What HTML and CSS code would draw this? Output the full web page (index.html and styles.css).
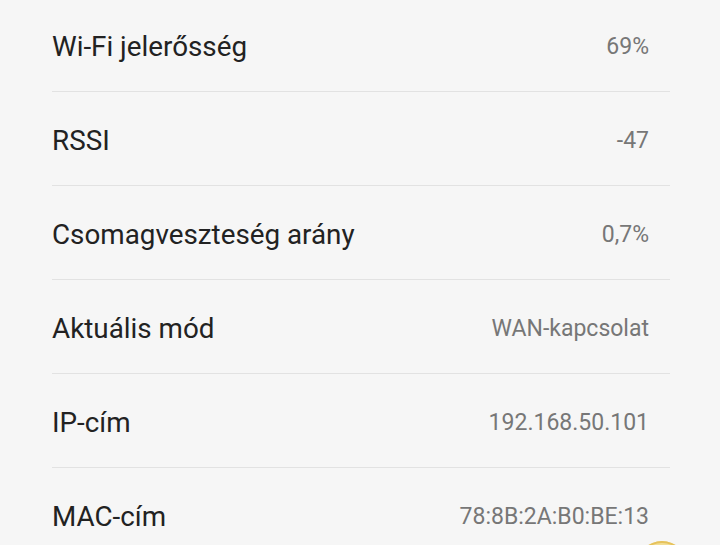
FILE: index.html
```html
<!DOCTYPE html>
<html lang="hu">
<head>
    <meta charset="UTF-8">
    <meta name="viewport" content="width=device-width, initial-scale=1.0">
    <title>Wi-Fi adatok</title>
    <link rel="stylesheet" href="styles.css">
</head>
<body>
    <div class="info-list">
        <div class="info-row">
            <span class="label">Wi-Fi jelerősség</span>
            <span class="value">69%</span>
        </div>
        <div class="info-row">
            <span class="label">RSSI</span>
            <span class="value">-47</span>
        </div>
        <div class="info-row">
            <span class="label">Csomagveszteség arány</span>
            <span class="value">0,7%</span>
        </div>
        <div class="info-row">
            <span class="label">Aktuális mód</span>
            <span class="value">WAN-kapcsolat</span>
        </div>
        <div class="info-row">
            <span class="label">IP-cím</span>
            <span class="value">192.168.50.101</span>
        </div>
        <div class="info-row">
            <span class="label">MAC-cím</span>
            <span class="value">78:8B:2A:B0:BE:13</span>
        </div>
    </div>
    <div class="fab"></div>
</body>
</html>
```
FILE: styles.css
```css
html {
    overflow: hidden;
}
body {
    font-family: Roboto, "Noto Sans", sans-serif;
    margin: 0;
    padding: 0;
    background-color: #f6f6f6;
    height: 545px;
    overflow: hidden;
    position: relative;
}
.info-list {
    margin: -2px 50px 0 52px;
}
.info-row {
    display: flex;
    justify-content: space-between;
    align-items: center;
    height: 89px;
    padding: 4px 21px 0 0;
    border-bottom: 1px solid #e2e2e2;
}
.label {
    font-size: 27.8px;
    color: #222222;
}
.value {
    font-size: 23px;
    color: #777777;
}
.fab {
    position: absolute;
    left: 637px;
    top: 541px;
    width: 50px;
    height: 50px;
    border-radius: 50%;
    background: #f3df96;
    box-shadow: inset 0 2px 0 #e6c25c;
}
```
